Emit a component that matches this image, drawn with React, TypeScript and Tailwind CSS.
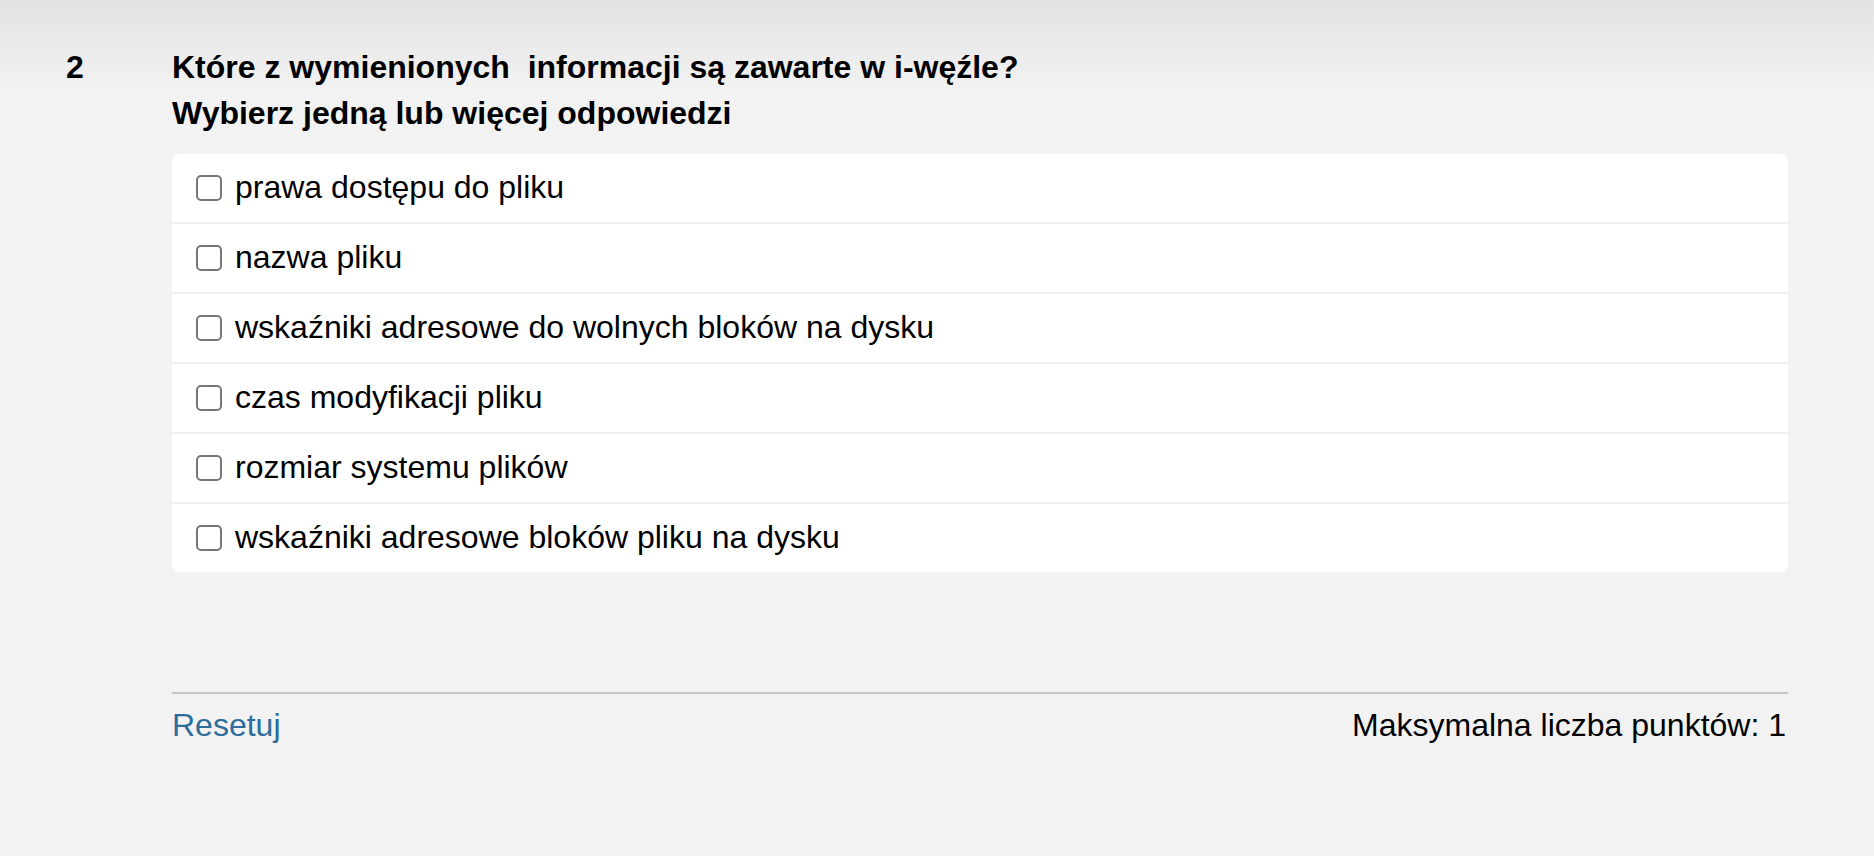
const options = [
  "prawa dostępu do pliku",
  "nazwa pliku",
  "wskaźniki adresowe do wolnych bloków na dysku",
  "czas modyfikacji pliku",
  "rozmiar systemu plików",
  "wskaźniki adresowe bloków pliku na dysku",
];

export default function App() {
  return (
    <div className="min-h-screen bg-[linear-gradient(to_bottom,#e3e3e3_0px,#f2f2f2_90px)] font-['Liberation_Sans',Arial,sans-serif] text-black">
      <div className="flex pl-[66px] pr-[86px] pt-[44px]">
        {/* question number */}
        <div className="w-[106px] shrink-0 text-[32px] font-bold leading-[46px]">2</div>

        <div className="flex-1">
          <h2 className="whitespace-pre text-[32px] font-bold leading-[46px]">
            {"Które z wymienionych  informacji są zawarte w i-węźle?"}
          </h2>
          <p className="text-[32px] font-bold leading-[46px]">Wybierz jedną lub więcej odpowiedzi</p>

          {/* answers */}
          <div className="mt-[18px] overflow-hidden rounded-[6px] bg-white">
            {options.map((o, i) => (
              <label
                key={i}
                className={`flex h-[68px] items-center gap-[13px] pl-[24px] ${
                  i > 0 ? "box-content border-t-2 border-[#f0f0f0]" : ""
                }`}
              >
                <span className="h-[26px] w-[26px] shrink-0 rounded-[5px] border-2 border-[#777777] bg-white" />
                <span className="pb-[2px] text-[32px]">{o}</span>
              </label>
            ))}
          </div>

          {/* footer */}
          <div className="mt-[120px] border-t-2 border-[#c8c8c8] pt-[7px]">
            <div className="flex items-start justify-between text-[32px]">
              <a className="cursor-pointer text-[#2d6d9b]">Resetuj</a>
              <span className="pr-[2px]">Maksymalna liczba punktów: 1</span>
            </div>
          </div>
        </div>
      </div>
    </div>
  );
}
